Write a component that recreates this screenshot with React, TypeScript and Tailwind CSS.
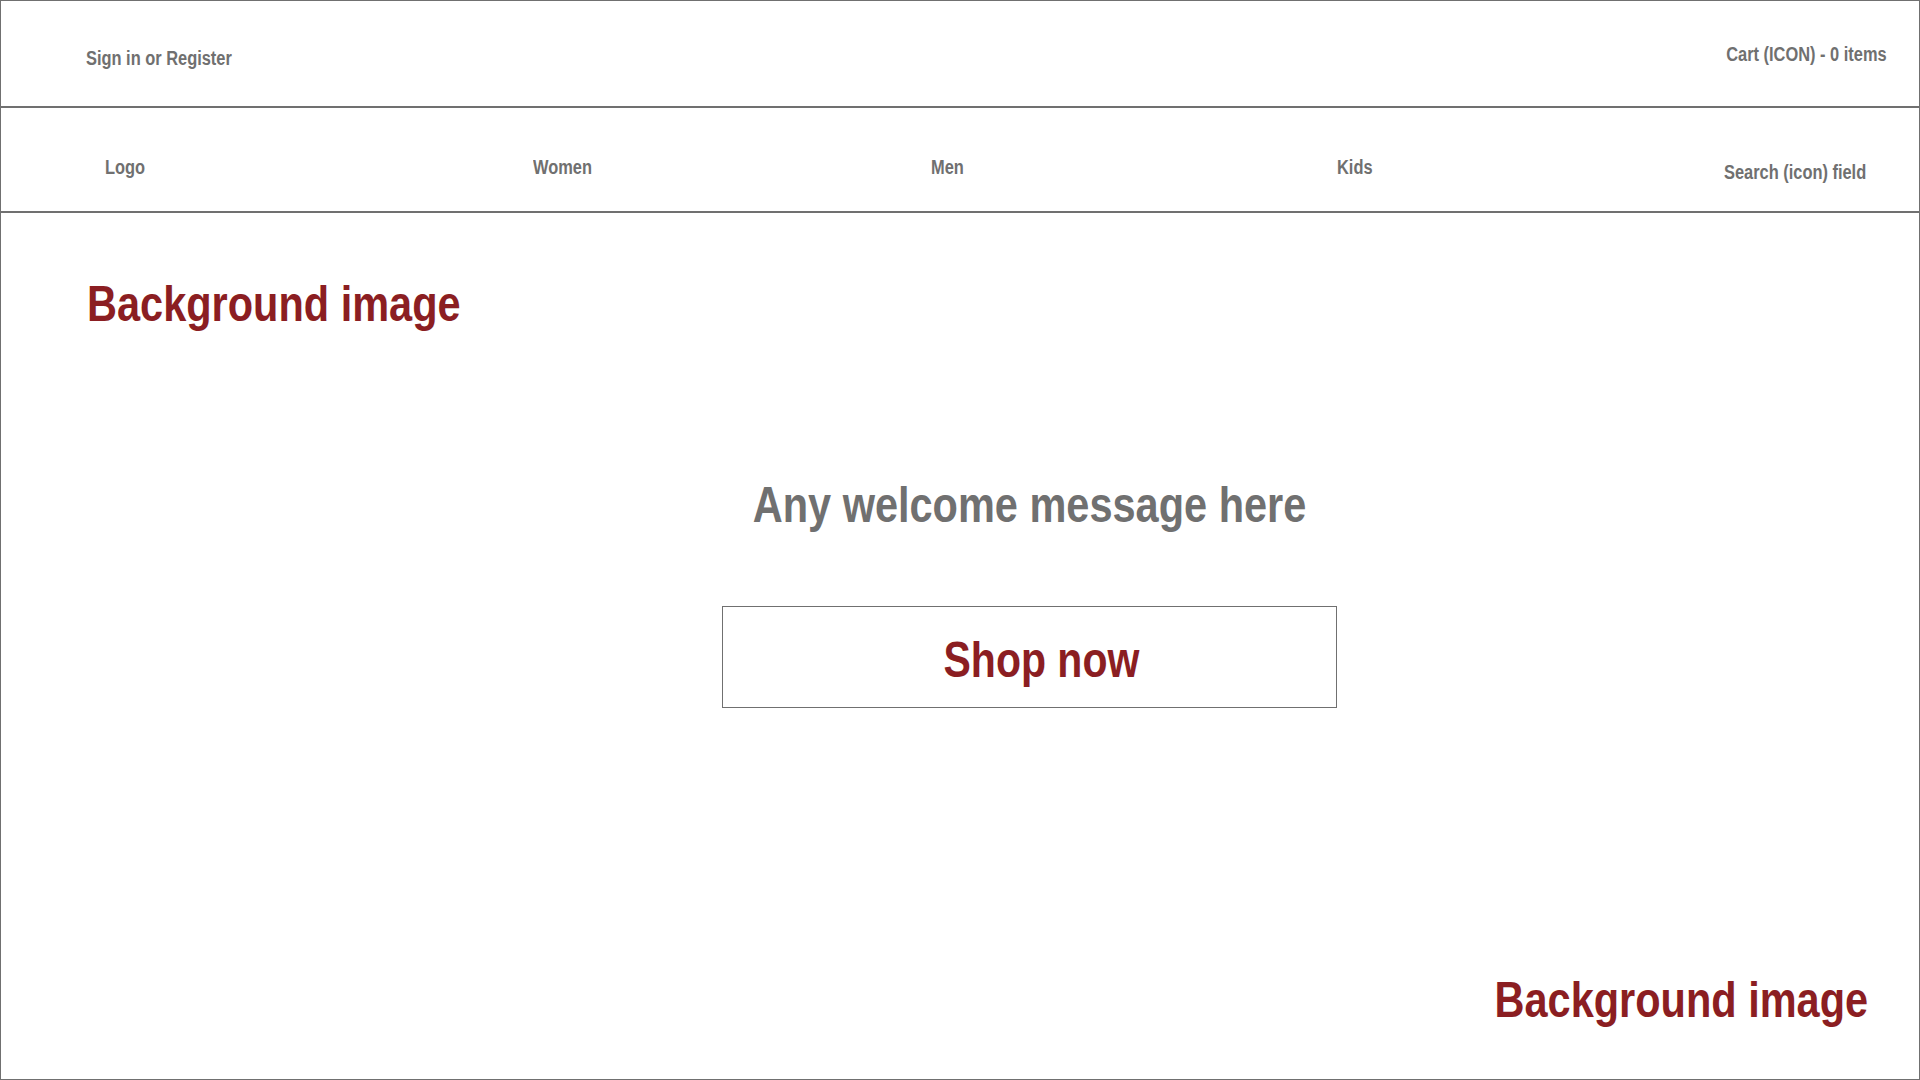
// Liberation Sans narrowed to match the condensed face in the mockup
function Narrow({ children, origin = "left", big = false }: { children: React.ReactNode; origin?: "left" | "right" | "center"; big?: boolean }) {
  const o = origin === "left" ? "origin-left" : origin === "right" ? "origin-right" : "origin-center";
  const s = big ? "scale-x-[0.83]" : "scale-x-[0.82]";
  return <span className={`inline-block whitespace-nowrap ${s} ${o}`}>{children}</span>;
}

export default function App() {
  return (
    <div className="w-[1920px] h-[1080px] flex flex-col border border-[#707070] bg-white font-['Liberation_Sans',Arial,sans-serif] font-bold leading-none">
      {/* top utility bar */}
      <div className="h-[105px] flex justify-between items-start pt-[43px] pl-[85px] pr-[32px] text-[20px] text-[#707070]">
        <a href="#" className="mt-[4px]"><Narrow>Sign in or Register</Narrow></a>
        <a href="#"><Narrow origin="right">Cart (ICON) - 0 items</Narrow></a>
      </div>
      <div className="h-[2px] bg-[#707070]" />

      {/* main nav */}
      <nav className="h-[103px] flex items-start pt-[49px] pl-[104px] text-[20px] text-[#707070]">
        <div className="w-[428px]"><Narrow>Logo</Narrow></div>
        <a href="#" className="w-[398px]"><Narrow>Women</Narrow></a>
        <a href="#" className="w-[406px]"><Narrow>Men</Narrow></a>
        <a href="#" className="w-[387px]"><Narrow>Kids</Narrow></a>
        <div className="mt-[5px]"><Narrow>Search (icon) field</Narrow></div>
      </nav>
      <div className="h-[2px] bg-[#707070]" />

      {/* hero */}
      <section className="flex-1 flex flex-col pt-[66px]">
        <h2 className="pl-[86px] text-[50px] text-[#8b1e22]"><Narrow big>Background image</Narrow></h2>

        <div className="w-[615px] ml-[721px] mt-[151px] flex flex-col">
          <h1 className="flex justify-center text-[50px] text-[#707070]">
            <Narrow origin="center" big>Any welcome message here</Narrow>
          </h1>
          <button className="mt-[76px] h-[102px] border border-[#707070] flex justify-center items-start pt-[28px] pl-[24px] text-[50px] text-[#8b1e22] font-bold leading-none">
            <Narrow origin="center">Shop now</Narrow>
          </button>
        </div>

        <h2 className="mt-[267px] self-end pr-[51px] text-[50px] text-[#8b1e22]">
          <Narrow origin="right" big>Background image</Narrow>
        </h2>
      </section>
    </div>
  );
}
